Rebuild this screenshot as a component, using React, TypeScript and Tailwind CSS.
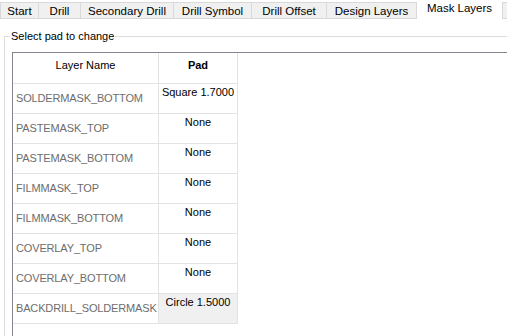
const tabs = [
  { label: 'Start', w: 'w-[39px]' },
  { label: 'Drill', w: 'w-[42px]' },
  { label: 'Secondary Drill', w: 'w-[93px]' },
  { label: 'Drill Symbol', w: 'w-[78px]' },
  { label: 'Drill Offset', w: 'w-[75px]' },
  { label: 'Design Layers', w: 'w-[90px]' },
]

const rows = [
  { name: 'SOLDERMASK_BOTTOM', pad: 'Square 1.7000' },
  { name: 'PASTEMASK_TOP', pad: 'None' },
  { name: 'PASTEMASK_BOTTOM', pad: 'None' },
  { name: 'FILMMASK_TOP', pad: 'None' },
  { name: 'FILMMASK_BOTTOM', pad: 'None' },
  { name: 'COVERLAY_TOP', pad: 'None' },
  { name: 'COVERLAY_BOTTOM', pad: 'None' },
  { name: 'BACKDRILL_SOLDERMASK', pad: 'Circle 1.5000', selected: true },
]

export default function App() {
  return (
    <div
      className="w-[507px] h-[336px] overflow-hidden bg-white text-[11px] leading-[16px] text-black"
      style={{ fontFamily: '"Segoe UI", "Liberation Sans", Arial, sans-serif' }}
    >
      {/* tab strip */}
      <div className="flex items-end h-[19px] w-[520px] text-[11.5px]">
        {tabs.map((t) => (
          <div
            key={t.label}
            className={`${t.w} h-[17px] shrink-0 flex items-center justify-center bg-[#f0f0f0] border border-[#d9d9d9] border-l-0 first:border-l whitespace-nowrap`}
          >
            {t.label}
          </div>
        ))}
        <div className="w-[85px] h-[19px] shrink-0 flex items-center justify-center bg-white pb-[3px] whitespace-nowrap">
          Mask Layers
        </div>
        <div className="w-[20px] h-[17px] shrink-0 bg-[#f0f0f0] border border-[#d9d9d9]" />
      </div>

      {/* group box */}
      <fieldset className="ml-[4px] mt-[9px] w-[520px] h-[320px] border-l border-t border-[#dcdcdc]">
        <legend className="ml-[5px] px-[1px] leading-[16px]">Select pad to change</legend>
        <div className="ml-[7px] mt-[8px] border-l border-t border-[#828790] h-[300px]">
          <div className="grid grid-cols-[146px_79px]">
            <div className="h-[31px] pt-[4px] text-center border-r border-b border-[#e3e3e3]">Layer Name</div>
            <div className="h-[31px] pt-[4px] text-center font-bold border-r border-b border-[#e3e3e3]">Pad</div>
            {rows.map((r) => (
              <div key={r.name} className="contents">
                <div className="h-[30px] pl-[3px] pt-[6px] text-[#6d6d6d] tracking-[-0.15px] border-r border-b border-[#e3e3e3] whitespace-nowrap overflow-hidden">
                  {r.name}
                </div>
                <div
                  className={`h-[30px] text-center whitespace-nowrap border-r border-b border-[#e3e3e3] ${r.selected ? 'bg-[#f0f0f0]' : ''}`}
                >
                  {r.pad}
                </div>
              </div>
            ))}
          </div>
        </div>
      </fieldset>
    </div>
  )
}
